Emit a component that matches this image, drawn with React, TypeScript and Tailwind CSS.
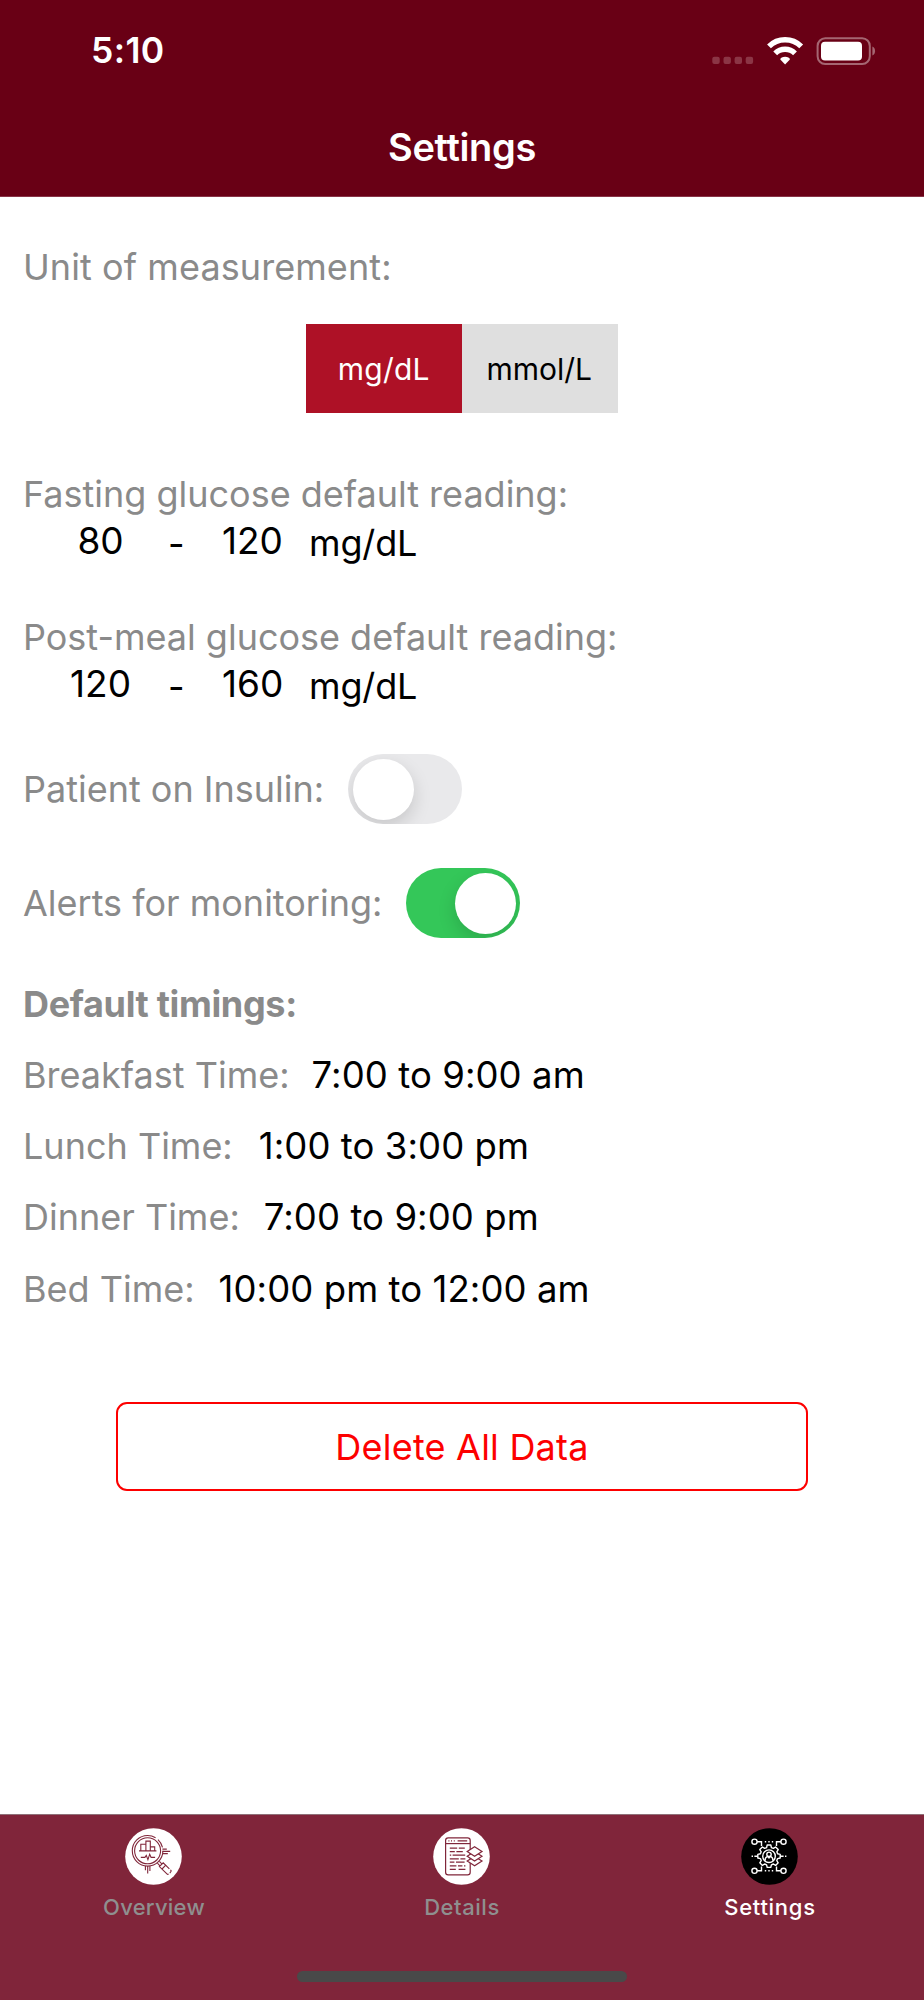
import { ReactNode } from "react";
import clsx from "clsx";

const timings = [
  { label: "Breakfast Time:", value: "7:00 to 9:00 am", gap: "gap-[22px]" },
  { label: "Lunch Time:", value: "1:00 to 3:00 pm", gap: "gap-[26px]" },
  { label: "Dinner Time:", value: "7:00 to 9:00 pm", gap: "gap-[24px]" },
  { label: "Bed Time:", value: "10:00 pm to 12:00 am", gap: "gap-[24px]" },
];

const StatusBar = () => (
  <div className="flex h-[101px] items-center justify-between pl-[91px] pr-[48px] text-white">
    <span className="text-[35.5px] font-semibold leading-[44px] tracking-[0.4px]">
      5:10
    </span>
    <svg width="164" height="30" viewBox="0 0 164 30" fill="none">
      {/* no signal */}
      <g fill="#8b3545">
        <rect x="0.3" y="20.7" width="7.4" height="7.4" rx="2" />
        <rect x="11.5" y="20.7" width="7.4" height="7.4" rx="2" />
        <rect x="22.6" y="20.7" width="7.4" height="7.4" rx="2" />
        <rect x="33.7" y="20.7" width="7.4" height="7.4" rx="2" />
      </g>
      {/* wifi */}
      <g stroke="#fff" strokeWidth="5.4">
        <path d="M57 10.4a22.8 22.8 0 0 1 32.2 0" />
        <path d="M63.2 17.3a14 14 0 0 1 19.8 0" />
      </g>
      <path d="M73.1 28.4l-4.8-4.9c0-3.6 9.6-3.6 9.6 0z" fill="#fff" />
      {/* battery */}
      <rect
        x="105.6"
        y="2.3"
        width="52.2"
        height="25.6"
        rx="7.6"
        stroke="#a56672"
        strokeWidth="2"
      />
      <rect x="109" y="5.8" width="41" height="18.8" rx="4" fill="#fff" />
      <path d="M160.4 10.6c3.6 1.6 3.6 7.4 0 9z" fill="#a56672" />
    </svg>
  </div>
);

const Toggle = ({ on }: { on?: boolean }) => (
  <div
    className={clsx(
      "flex h-[70px] w-[114px] items-center overflow-hidden rounded-full pl-[5px] pr-[4px]",
      on ? "justify-end bg-[#34c759]" : "bg-[#e9e9eb]"
    )}
  >
    <div className="size-[61px] rounded-full bg-white shadow-[0_7px_18px_rgba(0,0,0,0.15)]" />
  </div>
);

interface RangeProps {
  label: string;
  low: string;
  high: string;
}

const Range = ({ label, low, high }: RangeProps) => (
  <div className="h-[143px]">
    <p className="tracking-[-0.01px] text-[#8a8a8a]">{label}</p>
    <div className="flex pt-[3px]">
      <span className="w-[155px] text-center text-[37px]">{low}</span>
      <span className="-ml-[10px] w-[54px] pt-[3px]">-</span>
      <span className="w-[87px] text-[37px]">{high}</span>
      <span className="pt-[2px] tracking-[-0.15px]">mg/dL</span>
    </div>
  </div>
);

const OverviewIcon = () => (
  <svg
    width="57"
    height="57"
    viewBox="0 0 57 57"
    fill="none"
    stroke="#80263a"
    strokeWidth="1.1"
  >
    <circle cx="28.5" cy="28.5" r="28.3" fill="#fff" stroke="none" />
    <circle cx="22.6" cy="22.8" r="15.3" strokeDasharray="80 3 9 4" />
    <circle cx="22.6" cy="22.8" r="13" />
    <path d="M14 22.9h17.4M15.8 22.9v-6.6h5M20.9 22.9V13.1h4.4v9.8M25.3 18.9h4.4v4" />
    <path d="M15.8 29.4h4.1l1.4-2 1.6 4.2 1.8-5.4 1.4 3.2h4" />
    <path d="M37.4 21.1h4.4M37.6 23.4h7.6M37.6 25.6h5.2" />
    <path d="M20.4 38v4.2M22.7 38v7.6M24.9 38v5" />
    <path d="M32.4 35.2l2.6 2.6M34.4 33.4l2.4 2.4" />
    <path
      d="M34.4 38.6l3.8-3.8 7.8 7.6c1 1-2.8 4.8-3.8 3.8z"
      strokeDasharray="14 1.4 4 1.4"
    />
    <path d="M37 41l3.8-3.8" />
  </svg>
);

const DetailsIcon = () => (
  <svg
    width="57"
    height="57"
    viewBox="0 0 57 57"
    fill="none"
    stroke="#80263a"
    strokeWidth="1.2"
  >
    <circle cx="28.5" cy="28.5" r="28.3" fill="#fff" stroke="none" />
    <rect x="12.6" y="9.8" width="24.6" height="37" rx="2.6" />
    <path d="M12.6 15.6h24.6" />
    <path d="M15.4 12.8h1M18 12.8h1M20.8 12.8h1M24.6 12.8h9.6" />
    <path d="M16.8 20.2h7.4M25.8 20.2h6M16.8 23.6h5M23.4 23.6h6.4M16.8 27.2h1.4M19.6 27.2h12.6M16.8 30.8h9M27.4 30.8h5M16.8 34.2h4.6M23 34.2h8.6M16.8 37.8h6.6M25 37.8h4.4M31 37.8h1.4M16.8 41.4h6M25.6 41.4h6.8" />
    <g fill="#fff">
      <path d="M41.6 28.4l7.4 4.6-7.4 4.8-7.4-4.8z" />
      <path d="M41.6 23.4l7.4 4.8-7.4 4.8-7.4-4.8z" />
      <path d="M41.6 18.8l7.4 4.6-7.4 4.8-7.4-4.8z" />
    </g>
  </svg>
);

const SettingsIcon = () => (
  <svg
    width="57"
    height="57"
    viewBox="0 0 57 57"
    fill="none"
    stroke="#fff"
    strokeWidth="1.4"
  >
    <circle cx="28.5" cy="28.5" r="28.3" fill="#000" stroke="none" />
    <g transform="translate(28 28.2)">
      <path
        strokeLinejoin="round"
        d="M-1.8-11.2h3.6l.6 2.6 2 .8 2.2-1.4 2.6 2.6-1.4 2.2.8 2 2.6.6v3.6l-2.6.6-.8 2 1.4 2.2-2.6 2.6-2.2-1.4-2 .8-.6 2.6h-3.6l-.6-2.6-2-.8-2.2 1.4-2.6-2.6 1.4-2.2-.8-2-2.6-.6v-3.6l2.6-.6.8-2-1.4-2.2 2.6-2.6 2.2 1.4 2-.8z"
      />
      <circle r="6.3" />
      <circle cy="-1.9" r="2.2" />
      <path d="M-4 4.6c0-3 1.4-4 2.6-4.4L0 1.8 1.4.2C2.6.6 4 1.6 4 4.6" />
      <circle cx="-14.5" cy="-14.5" r="2.6" />
      <circle cx="14.5" cy="-14.5" r="2.6" />
      <circle cx="-14.5" cy="14.6" r="2.6" />
      <circle cx="14.5" cy="14.6" r="2.6" />
      <path d="M-11.9-14.5h4.4v4.2M11.9-14.5h-4.4v4.2M-11.9 14.6h4.4v-4.2M11.9 14.6h-4.4v-4.2" />
      <path d="M-4.2-14.5h1.4M-.7-14.5h1.4M2.8-14.5h1.4M-4.2 14.6h1.4M-.7 14.6h1.4M2.8 14.6h1.4M-17.4 0h1.4M-14.6 0h3.4M11.2 0h3.4M16 0h1.4" />
    </g>
  </svg>
);

interface TabProps {
  icon: ReactNode;
  label: string;
  className: string;
}

const Tab = ({ icon, label, className }: TabProps) => (
  <a className="flex flex-1 flex-col items-center pt-[13px]">
    <div className="pr-px">{icon}</div>
    <span
      className={clsx(
        "mt-[7px] text-[22px] font-medium leading-[30px]",
        className
      )}
    >
      {label}
    </span>
  </a>
);

export default function App() {
  return (
    <div className="flex h-[2000px] w-[924px] flex-col bg-white font-['Inter',sans-serif] text-[36px] leading-[44px] text-black">
      <header className="h-[197px] border-b border-[#883447] bg-[#690015]">
        <StatusBar />
        <h1 className="mt-[23px] text-center text-[38px] font-semibold leading-[46px] tracking-[-0.35px] text-white">
          Settings
        </h1>
      </header>

      <main className="flex flex-1 flex-col pl-[23px] pt-[48px]">
        <p className="tracking-[0.08px] text-[#8a8a8a]">Unit of measurement:</p>
        <div className="ml-[283px] mt-[35px] flex h-[89px] w-[312px] text-[30px]">
          <button className="flex-1 bg-[#ae1126] tracking-[0.25px] text-white">
            mg/dL
          </button>
          <button className="flex-1 bg-[#dfdfdf] pr-px">mmol/L</button>
        </div>

        <div className="mt-[59px]">
          <Range
            label="Fasting glucose default reading:"
            low="80"
            high="120"
          />
          <Range
            label="Post-meal glucose default reading:"
            low="120"
            high="160"
          />
        </div>

        <div className="-mt-[4px] flex h-[70px] items-center gap-[24px]">
          <span className="text-[#8a8a8a]">Patient on Insulin:</span>
          <Toggle />
        </div>
        <div className="mt-[44px] flex h-[70px] items-center gap-[24px]">
          <span className="text-[#8a8a8a]">Alerts for monitoring:</span>
          <Toggle on />
        </div>

        <h2 className="mt-[44px] font-bold tracking-[-0.34px] text-[#8a8a8a]">
          Default timings:
        </h2>
        <div className="mt-[13px]">
          {timings.map((t) => (
            <div
              key={t.label}
              className={clsx("flex h-[71.4px] items-center", t.gap)}
            >
              <span className="text-[#8a8a8a]">{t.label}</span>
              <span className="text-[36.5px] tracking-[0.08px]">
                {t.value}
              </span>
            </div>
          ))}
        </div>

        <button className="ml-[93px] mt-[77px] h-[89px] w-[692px] rounded-[11px] border-[2.4px] border-[#fd0000] pt-[2px] tracking-[0.22px] text-[#fd0000]">
          Delete All Data
        </button>
      </main>

      <footer className="flex h-[186px] flex-col border-t border-[#8f7078] bg-[#80253a]">
        <nav className="flex">
          <Tab
            icon={<OverviewIcon />}
            label="Overview"
            className="tracking-[0.24px] text-[#8f8f8f]"
          />
          <Tab
            icon={<DetailsIcon />}
            label="Details"
            className="tracking-[0.55px] text-[#8f8f8f]"
          />
          <Tab
            icon={<SettingsIcon />}
            label="Settings"
            className="tracking-[0.72px] text-white"
          />
        </nav>
        <div className="mx-auto mt-auto mb-[18px] h-[11px] w-[330px] rounded-full bg-[#494949]" />
      </footer>
    </div>
  );
}
